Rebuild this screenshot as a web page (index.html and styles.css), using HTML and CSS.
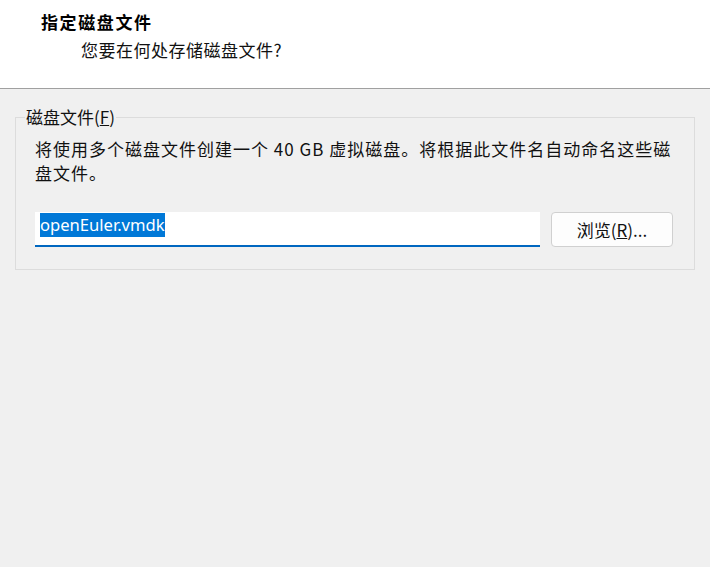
FILE: index.html
```html
<!DOCTYPE html>
<html lang="zh-CN">
<head>
<meta charset="utf-8">
<title>指定磁盘文件</title>
<link rel="stylesheet" href="styles.css">
</head>
<body>
<header class="header">
  <div class="title">指定磁盘文件</div>
  <div class="subtitle">您要在何处存储磁盘文件?</div>
</header>
<fieldset class="group">
  <legend class="legend">磁盘文件(<u>F</u>)</legend>
  <p class="desc">将使用多个磁盘文件创建一个 40 GB 虚拟磁盘。将根据此文件名自动命名这些磁盘文件。</p>
  <div class="row">
    <div class="input"><span class="sel">openEuler.vmdk</span></div>
    <button class="btn" type="button">浏览(<u>R</u>)...</button>
  </div>
</fieldset>
</body>
</html>
```

FILE: styles.css
```css
html, body {
  margin: 0;
  padding: 0;
}
body {
  width: 710px;
  height: 567px;
  background: #f0f0f0;
  font-family: "Noto Sans CJK SC", "Noto Sans", sans-serif;
  color: #000;
  overflow: hidden;
}
.header {
  height: 89px;
  box-sizing: border-box;
  background: #fff;
  border-bottom: 1px solid #a0a0a0;
  padding: 10px 0 0 41px;
}
.title {
  font-size: 17px;
  font-weight: bold;
  line-height: 24px;
  letter-spacing: 1.6px;
}
.subtitle {
  font-size: 17px;
  line-height: 24px;
  margin: 4px 0 0 40px;
  letter-spacing: 0.5px;
  color: #111;
}
.group {
  margin: 18px 15px 0 15px;
  padding: 0 20px 22px 19px;
  border: 1px solid #dcdcdc;
  min-width: 0;
}
.legend {
  margin-left: -10px;
  padding: 0 1px;
  font-size: 17px;
  line-height: 20px;
  color: #111;
}
.desc {
  margin: 10px 0 0 0;
  font-size: 17px;
  line-height: 24px;
  letter-spacing: 1px;
  color: #111;
}
.row {
  display: flex;
  gap: 11px;
  margin-top: 27px;
}
.input {
  width: 505px;
  height: 35px;
  box-sizing: border-box;
  background: #fff;
  border-bottom: 2px solid #0067c0;
  padding: 1px 0 0 5px;
  font-family: "Noto Sans", sans-serif;
  font-size: 16.6px;
  line-height: 24px;
}
.sel {
  background: #0078d7;
  color: #fff;
  display: inline-block;
  height: 24px;
}
.btn {
  width: 122px;
  height: 35px;
  box-sizing: border-box;
  background: #fdfdfd;
  border: 1px solid #d0d0d0;
  border-radius: 4px;
  font-family: "Noto Sans CJK SC", "Noto Sans", sans-serif;
  font-size: 17px;
  color: #111;
  padding: 0;
  display: flex;
  align-items: center;
  justify-content: center;
}
```
